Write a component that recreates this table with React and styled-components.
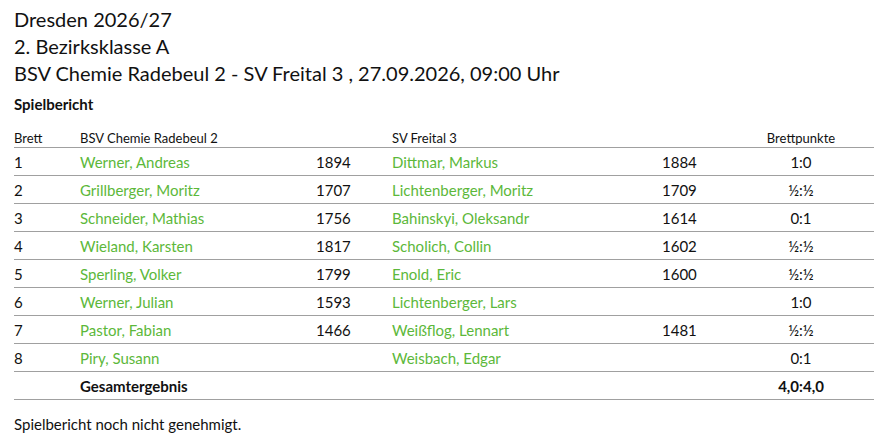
import React from 'react';
import styled, { createGlobalStyle } from 'styled-components';

const GlobalStyle = createGlobalStyle`
  body {
    margin: 0;
    background: #ffffff;
    font-family: Lato, "Open Sans", sans-serif;
    color: #111111;
  }
`;

const Page = styled.div`
  padding: 6px 14px 0 14px;
  width: 860px;
`;

const Title = styled.div`
  font-size: 20px;
  line-height: 27px;
`;

const Section = styled.div`
  font-size: 15px;
  font-weight: bold;
  line-height: 21px;
  margin-top: 7px;
`;

const Table = styled.table`
  width: 860px;
  border-collapse: collapse;
  table-layout: fixed;
  margin-top: 13px;
`;

const Head = styled.th`
  font-size: 13px;
  font-weight: normal;
  height: 19px;
  padding: 0;
  text-align: ${p => (p.$center ? 'center' : 'left')};
  border-bottom: 1px solid #a0a0a0;
  vertical-align: middle;
`;

const Cell = styled.td`
  font-size: 15px;
  height: 27px;
  padding: 0;
  text-align: ${p => (p.$center ? 'center' : 'left')};
  font-weight: ${p => (p.$bold ? 'bold' : 'normal')};
  color: ${p => (p.$green ? '#5cb83a' : '#111111')};
  border-bottom: 1px solid #a0a0a0;
  vertical-align: middle;
  white-space: nowrap;
`;

const Note = styled.p`
  font-size: 15px;
  line-height: 18px;
  margin: 15px 0 0 0;
`;

const games = [
  ['1', 'Werner, Andreas', '1894', 'Dittmar, Markus', '1884', '1:0'],
  ['2', 'Grillberger, Moritz', '1707', 'Lichtenberger, Moritz', '1709', '½:½'],
  ['3', 'Schneider, Mathias', '1756', 'Bahinskyi, Oleksandr', '1614', '0:1'],
  ['4', 'Wieland, Karsten', '1817', 'Scholich, Collin', '1602', '½:½'],
  ['5', 'Sperling, Volker', '1799', 'Enold, Eric', '1600', '½:½'],
  ['6', 'Werner, Julian', '1593', 'Lichtenberger, Lars', '', '1:0'],
  ['7', 'Pastor, Fabian', '1466', 'Weißflog, Lennart', '1481', '½:½'],
  ['8', 'Piry, Susann', '', 'Weisbach, Edgar', '', '0:1'],
];

export default function App() {
  return (
    <Page>
      <GlobalStyle />
      <Title>Dresden 2026/27</Title>
      <Title>2. Bezirksklasse A</Title>
      <Title>BSV Chemie Radebeul 2 - SV Freital 3 , 27.09.2026, 09:00 Uhr</Title>
      <Section>Spielbericht</Section>
      <Table>
        <colgroup>
          <col style={{ width: 66 }} />
          <col style={{ width: 236 }} />
          <col style={{ width: 76 }} />
          <col style={{ width: 270 }} />
          <col style={{ width: 66 }} />
          <col style={{ width: 146 }} />
        </colgroup>
        <thead>
          <tr>
            <Head>Brett</Head>
            <Head>BSV Chemie Radebeul 2</Head>
            <Head />
            <Head>SV Freital 3</Head>
            <Head />
            <Head $center>Brettpunkte</Head>
          </tr>
        </thead>
        <tbody>
          {games.map(g => (
            <tr key={g[0]}>
              <Cell>{g[0]}</Cell>
              <Cell $green>{g[1]}</Cell>
              <Cell>{g[2]}</Cell>
              <Cell $green>{g[3]}</Cell>
              <Cell>{g[4]}</Cell>
              <Cell $center>{g[5]}</Cell>
            </tr>
          ))}
          <tr>
            <Cell />
            <Cell $bold>Gesamtergebnis</Cell>
            <Cell />
            <Cell />
            <Cell />
            <Cell $center $bold>4,0:4,0</Cell>
          </tr>
        </tbody>
      </Table>
      <Note>Spielbericht noch nicht genehmigt.</Note>
    </Page>
  );
}
